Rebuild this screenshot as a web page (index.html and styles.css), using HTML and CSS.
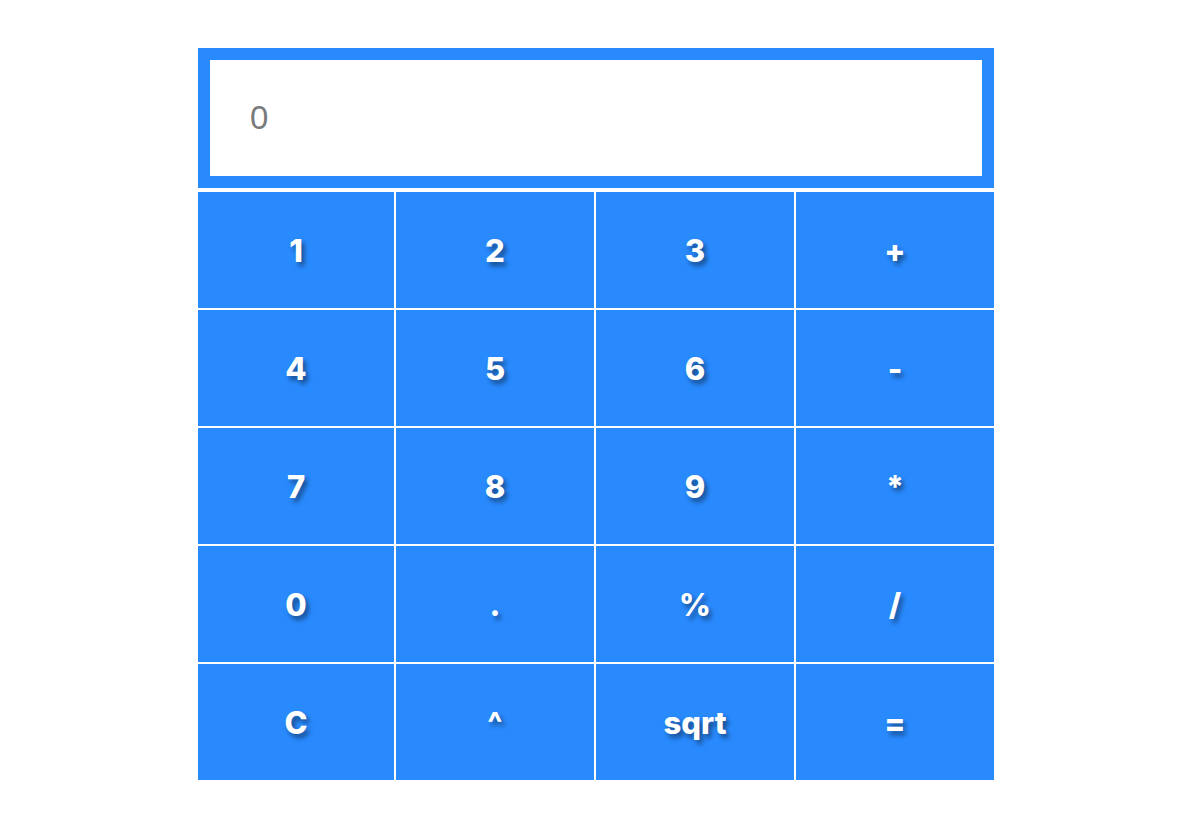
FILE: index.html
```html
<!DOCTYPE html>
<html lang="en">
<head>
<meta charset="utf-8">
<title>Calculator</title>
<link rel="stylesheet" href="styles.css">
</head>
<body>
<div class="page">
  <div class="calc">
    <div class="display"><span class="display-value">0</span></div>
    <div class="keys">
      <button class="key">1</button>
      <button class="key">2</button>
      <button class="key">3</button>
      <button class="key">+</button>
      <button class="key">4</button>
      <button class="key">5</button>
      <button class="key">6</button>
      <button class="key">-</button>
      <button class="key">7</button>
      <button class="key">8</button>
      <button class="key">9</button>
      <button class="key">*</button>
      <button class="key">0</button>
      <button class="key">.</button>
      <button class="key">%</button>
      <button class="key">/</button>
      <button class="key">C</button>
      <button class="key">^</button>
      <button class="key">sqrt</button>
      <button class="key">=</button>
    </div>
  </div>
</div>
</body>
</html>
```
FILE: styles.css
```css
html, body {
  margin: 0;
  padding: 0;
  background: #ffffff;
}

.page {
  padding: 48px 0 0 4px;
}

.calc {
  width: 796px;
  margin: 0 auto;
}

.display {
  box-sizing: border-box;
  height: 140px;
  border: 12px solid #298afe;
  background: #ffffff;
  display: flex;
  align-items: center;
  padding-left: 40px;
}

.display-value {
  font-family: "Liberation Sans", Arial, sans-serif;
  font-size: 33px;
  color: #7a7a7a;
}

.keys {
  margin-top: 4px;
  display: grid;
  grid-template-columns: 196px 198px 198px 198px;
  grid-auto-rows: 116px;
  gap: 2px;
}

.key {
  margin: 0;
  padding: 0;
  border: none;
  background: #298afe;
  color: #ffffff;
  font-family: Inter, "Liberation Sans", sans-serif;
  font-weight: 800;
  font-size: 31px;
  text-shadow: 3px 4px 5px rgba(0, 0, 0, 0.45);
  display: flex;
  align-items: center;
  justify-content: center;
  cursor: pointer;
}
```
